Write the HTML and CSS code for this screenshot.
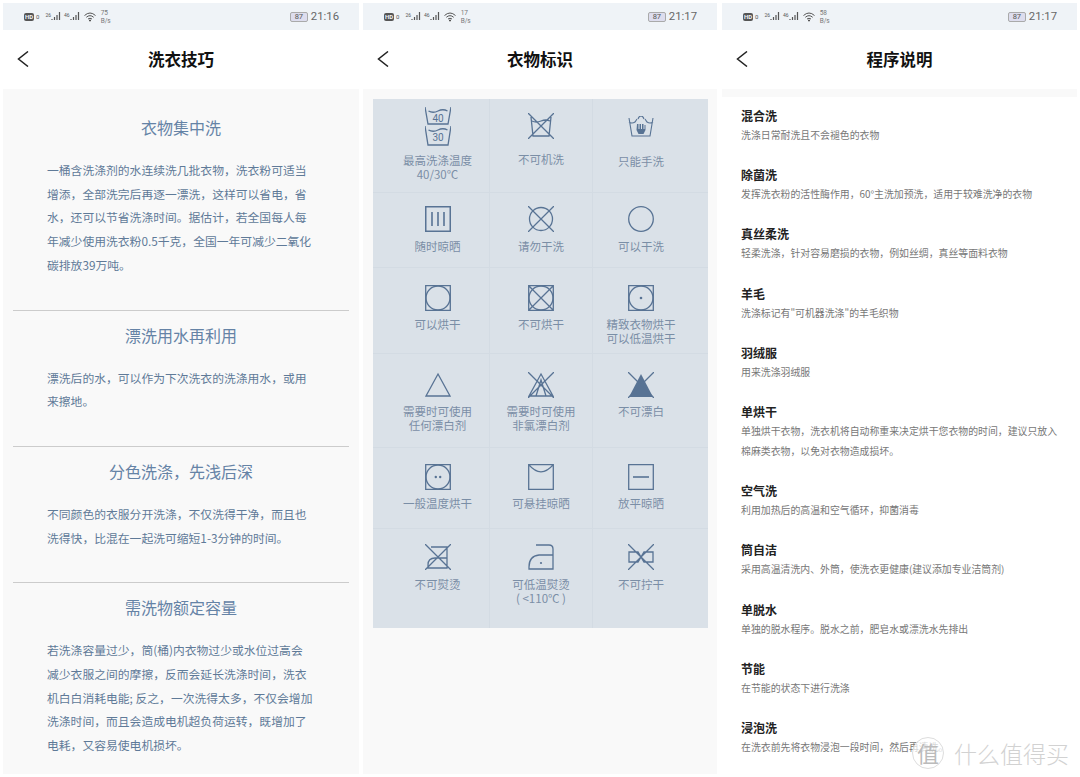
FILE: index.html
```html
<!DOCTYPE html>
<html lang="zh-CN">
<head>
    <meta charset="UTF-8">
    <title>洗衣机说明</title>
    <link rel="stylesheet" href="styles.css">
</head>
<body>
    <div class="screens">

        <!-- 洗衣技巧 -->
        <div class="screen screen-tips">
            <div class="status">
                <span class="hd">HD</span><span class="sim">0</span>
                <span class="net">26</span><svg class="bars" viewBox="0 0 11 9"><path d="M1 7v1M3.500 5v3M6 3v5M8.500 0v8"/></svg>
                <span class="net">46</span><svg class="bars" viewBox="0 0 11 9"><path d="M1 7v1M3.500 5v3M6 3v5M8.500 0v8"/></svg>
                <svg class="wifi" viewBox="0 0 12 10"><path d="M.5 3.500Q6-1.500 11.500 3.500M2.300 5.300Q6 2 9.700 5.300M4 7Q6 5.500 8 7"/><path class="wifi-dot" d="M5 8.500h2"/></svg>
                <span class="speed">75<br>B/s</span>
                <span class="status-right"><span class="battery">87</span><span class="time">21:16</span></span>
            </div>
            <div class="header">
                <svg class="back" viewBox="0 0 12 16"><path d="M11 .5 1.500 8 11 15.500"/></svg>
                <h1>洗衣技巧</h1>
            </div>
            <div class="tips">
                <div class="tip">
                    <h2>衣物集中洗</h2>
                    <p>一桶含洗涤剂的水连续洗几批衣物，洗衣粉可适当<br>增添，全部洗完后再逐一漂洗，这样可以省电，省<br>水，还可以节省洗涤时间。据估计，若全国每人每<br>年减少使用洗衣粉0.5千克，全国一年可减少二氧化<br>碳排放39万吨。</p>
                </div>
                <div class="tip">
                    <h2>漂洗用水再利用</h2>
                    <p>漂洗后的水，可以作为下次洗衣的洗涤用水，或用<br>来擦地。</p>
                </div>
                <div class="tip">
                    <h2>分色洗涤，先浅后深</h2>
                    <p>不同颜色的衣服分开洗涤，不仅洗得干净，而且也<br>洗得快，比混在一起洗可缩短1-3分钟的时间。</p>
                </div>
                <div class="tip">
                    <h2>需洗物额定容量</h2>
                    <p>若洗涤容量过少，筒(桶)内衣物过少或水位过高会<br>减少衣服之间的摩擦，反而会延长洗涤时间，洗衣<br>机白白消耗电能; 反之，一次洗得太多，不仅会增加<br>洗涤时间，而且会造成电机超负荷运转，既增加了<br>电耗，又容易使电机损坏。</p>
                </div>
            </div>
        </div>

        <!-- 衣物标识 -->
        <div class="screen screen-symbols">
            <div class="status">
                <span class="hd">HD</span><span class="sim">0</span>
                <span class="net">26</span><svg class="bars" viewBox="0 0 11 9"><path d="M1 7v1M3.500 5v3M6 3v5M8.500 0v8"/></svg>
                <span class="net">46</span><svg class="bars" viewBox="0 0 11 9"><path d="M1 7v1M3.500 5v3M6 3v5M8.500 0v8"/></svg>
                <svg class="wifi" viewBox="0 0 12 10"><path d="M.5 3.500Q6-1.500 11.500 3.500M2.300 5.300Q6 2 9.700 5.300M4 7Q6 5.500 8 7"/><path class="wifi-dot" d="M5 8.500h2"/></svg>
                <span class="speed">17<br>B/s</span>
                <span class="status-right"><span class="battery">87</span><span class="time">21:17</span></span>
            </div>
            <div class="header">
                <svg class="back" viewBox="0 0 12 16"><path d="M11 .5 1.500 8 11 15.500"/></svg>
                <h1>衣物标识</h1>
            </div>
            <div class="symbols-page">
                <div class="symbols">
                    <div class="sym-row row-1">
                        <div class="cell">
                            <svg class="icon icon-tall" viewBox="0 0 26 40">
                                <path d="M0 0 3 17H23L26 0M3.500 4Q8 6.500 13 4T22.500 4"/>
                                <path d="M0 19 3 38H23L26 19M3.500 23Q8 25.500 13 23T22.500 23"/>
                                <text x="13" y="15" class="icon-num">40</text>
                                <text x="13" y="34" class="icon-num">30</text>
                            </svg>
                            <span>最高洗涤温度<br>40/30℃</span>
                        </div>
                        <div class="cell">
                            <svg class="icon icon-mid" viewBox="0 0 26 26"><path d="M3 4 5 23H21L23 4M4 8Q8 10 13 8T22 8M0 0 26 26M26 0 0 26"/></svg>
                            <span>不可机洗</span>
                        </div>
                        <div class="cell">
                            <svg class="icon icon-low" viewBox="0 0 26 22"><path d="M1 2 4 20H22L25 2M1 6Q4 8 7 6L9 3M25 6Q22 8 19 6L17 3M10 3Q11 0 13 0T16 3" class="icon-thin"/><path class="icon-fill" d="M9 8h1.500v5h1V8h1.500v5h1V8h1.500v5h1V9h1v5l-2 4h-5l-2-4z"/></svg>
                            <span>只能手洗</span>
                        </div>
                    </div>
                    <div class="sym-row row-2">
                        <div class="cell">
                            <svg class="icon" viewBox="0 0 26 26"><path d="M.7.7H25.300V25.300H.7ZM7 6V20M13 6V20M19 6V20" class="icon-bold"/></svg>
                            <span>随时晾晒</span>
                        </div>
                        <div class="cell">
                            <svg class="icon" viewBox="0 0 26 26"><circle cx="13" cy="13" r="11.500"/><path d="M0 0 26 26M26 0 0 26"/></svg>
                            <span>请勿干洗</span>
                        </div>
                        <div class="cell">
                            <svg class="icon" viewBox="0 0 26 26"><circle cx="13" cy="13" r="12.300"/></svg>
                            <span>可以干洗</span>
                        </div>
                    </div>
                    <div class="sym-row row-3">
                        <div class="cell">
                            <svg class="icon" viewBox="0 0 26 26"><path d="M.7.7H25.300V25.300H.7Z"/><circle cx="13" cy="13" r="12"/></svg>
                            <span>可以烘干</span>
                        </div>
                        <div class="cell">
                            <svg class="icon" viewBox="0 0 26 26"><path d="M.7.7H25.300V25.300H.7ZM.7.7 25.300 25.300M25.300.7 .7 25.300"/><circle cx="13" cy="13" r="12"/></svg>
                            <span>不可烘干</span>
                        </div>
                        <div class="cell">
                            <svg class="icon" viewBox="0 0 26 26"><path d="M.7.7H25.300V25.300H.7Z"/><circle cx="13" cy="13" r="12"/><circle class="icon-fill" cx="13" cy="13" r="1.300"/></svg>
                            <span>精致衣物烘干<br>可以低温烘干</span>
                        </div>
                    </div>
                    <div class="sym-row row-4">
                        <div class="cell">
                            <svg class="icon" viewBox="0 0 26 26"><path d="M13 2 25 24H1Z"/></svg>
                            <span>需要时可使用<br>任何漂白剂</span>
                        </div>
                        <div class="cell">
                            <svg class="icon" viewBox="0 0 26 26"><path d="M13 2 25 24H1ZM8 24 13 8 18 24M0 0 26 26M26 0 0 26"/></svg>
                            <span>需要时可使用<br>非氯漂白剂</span>
                        </div>
                        <div class="cell">
                            <svg class="icon" viewBox="0 0 26 26"><path class="icon-fill" d="M13 2 25 25H1Z"/><path d="M0 0 26 26M26 0 0 26"/></svg>
                            <span>不可漂白</span>
                        </div>
                    </div>
                    <div class="sym-row row-5">
                        <div class="cell">
                            <svg class="icon" viewBox="0 0 26 26"><path d="M.7.7H25.300V25.300H.7Z"/><circle cx="13" cy="13" r="12"/><circle class="icon-fill" cx="10.800" cy="13" r="1.200"/><circle class="icon-fill" cx="15.200" cy="13" r="1.200"/></svg>
                            <span>一般温度烘干</span>
                        </div>
                        <div class="cell">
                            <svg class="icon" viewBox="0 0 26 26"><path d="M.7.7H25.300V25.300H.7ZM.7.7Q13 15 25.300.7"/></svg>
                            <span>可悬挂晾晒</span>
                        </div>
                        <div class="cell">
                            <svg class="icon" viewBox="0 0 26 26"><path d="M.7.7H25.300V25.300H.7Z"/><path class="icon-bold" d="M5 13H21"/></svg>
                            <span>放平晾晒</span>
                        </div>
                    </div>
                    <div class="sym-row row-6">
                        <div class="cell">
                            <svg class="icon" viewBox="0 0 26 26"><path d="M6 3H22V24H3V21Q3 14 10 14H22M0 0 26 26M26 0 0 26"/></svg>
                            <span>不可熨烫</span>
                        </div>
                        <div class="cell">
                            <svg class="icon" viewBox="0 0 26 26"><path d="M8 1H21Q25 1 25 5V25H1V23Q1 12 11 11H25"/><circle class="icon-fill" cx="13" cy="19" r="1.100"/></svg>
                            <span>可低温熨烫<br>( &lt;110℃ )</span>
                        </div>
                        <div class="cell">
                            <svg class="icon" viewBox="0 0 26 26"><path d="M1 8H10L16 18H25V8H16L10 18H1ZM0 0 26 26M26 0 0 26"/></svg>
                            <span>不可拧干</span>
                        </div>
                    </div>
                </div>
            </div>
        </div>

        <!-- 程序说明 -->
        <div class="screen screen-programs">
            <div class="status">
                <span class="hd">HD</span><span class="sim">0</span>
                <span class="net">26</span><svg class="bars" viewBox="0 0 11 9"><path d="M1 7v1M3.500 5v3M6 3v5M8.500 0v8"/></svg>
                <span class="net">46</span><svg class="bars" viewBox="0 0 11 9"><path d="M1 7v1M3.500 5v3M6 3v5M8.500 0v8"/></svg>
                <svg class="wifi" viewBox="0 0 12 10"><path d="M.5 3.500Q6-1.500 11.500 3.500M2.300 5.300Q6 2 9.700 5.300M4 7Q6 5.500 8 7"/><path class="wifi-dot" d="M5 8.500h2"/></svg>
                <span class="speed">58<br>B/s</span>
                <span class="status-right"><span class="battery">87</span><span class="time">21:17</span></span>
            </div>
            <div class="header">
                <svg class="back" viewBox="0 0 12 16"><path d="M11 .5 1.500 8 11 15.500"/></svg>
                <h1>程序说明</h1>
            </div>
            <div class="band"></div>
            <div class="programs">
                <div class="program"><h3>混合洗</h3><p>洗涤日常耐洗且不会褪色的衣物</p></div>
                <div class="program"><h3>除菌洗</h3><p>发挥洗衣粉的活性酶作用，60°主洗加预洗，适用于较难洗净的衣物</p></div>
                <div class="program"><h3>真丝柔洗</h3><p>轻柔洗涤，针对容易磨损的衣物，例如丝绸，真丝等面料衣物</p></div>
                <div class="program"><h3>羊毛</h3><p>洗涤标记有"可机器洗涤"的羊毛织物</p></div>
                <div class="program"><h3>羽绒服</h3><p>用来洗涤羽绒服</p></div>
                <div class="program"><h3>单烘干</h3><p>单独烘干衣物，洗衣机将自动称重来决定烘干您衣物的时间，建议只放入<br>棉麻类衣物，以免对衣物造成损坏。</p></div>
                <div class="program"><h3>空气洗</h3><p>利用加热后的高温和空气循环，抑菌消毒</p></div>
                <div class="program"><h3>筒自洁</h3><p>采用高温清洗内、外筒，使洗衣更健康(建议添加专业洁筒剂)</p></div>
                <div class="program"><h3>单脱水</h3><p>单独的脱水程序。脱水之前，肥皂水或漂洗水先排出</p></div>
                <div class="program"><h3>节能</h3><p>在节能的状态下进行洗涤</p></div>
                <div class="program"><h3>浸泡洗</h3><p>在洗衣前先将衣物浸泡一段时间，然后再清洗。</p></div>
            </div>
            <div class="watermark">
                <span class="watermark-badge">值</span>
                <span class="watermark-name">什么值得买</span>
            </div>
        </div>

    </div>
</body>
</html>
```

FILE: styles.css
```css
body {
    margin: 0;
    background-color: #fff;
    font-family: "Noto Sans CJK SC", "Noto Sans", sans-serif;
    overflow: hidden;
}

.screens {
    display: flex;
    height: 771px;
    padding: 3px 3px 3px 3px;
}

.screen {
    display: flex;
    flex-direction: column;
    position: relative;
    overflow: hidden;
}

.screen-tips {
    width: 356px;
    margin-right: 4px;
}

.screen-symbols {
    width: 354px;
    margin-right: 5px;
}

.screen-programs {
    width: 355px;
}

/* 状态栏 */
.status {
    display: flex;
    align-items: center;
    height: 27px;
    flex-shrink: 0;
    padding: 0 20px 0 21px;
    background-color: #eff3f7;
    color: #555;
    font-family: Roboto, sans-serif;
}

.hd {
    width: 10px;
    height: 8px;
    border-radius: 2px;
    background-color: #555;
    color: #eff3f7;
    font-size: 6px;
    font-weight: 700;
    line-height: 8px;
    text-align: center;
}

.sim {
    margin: 0 6px 0 2px;
    font-size: 6px;
}

.net {
    font-size: 5px;
    align-self: flex-start;
    margin-top: 9px;
}

.bars {
    width: 11px;
    height: 9px;
    margin-right: 2px;
    fill: none;
    stroke: #555;
    stroke-width: 1.200;
}

.wifi {
    width: 12px;
    height: 10px;
    margin-left: 1px;
    fill: none;
    stroke: #555;
    stroke-width: 1;
}

.wifi-dot {
    stroke-width: 1.500;
}

.speed {
    margin-left: 5px;
    font-size: 6.500px;
    line-height: 8px;
    color: #777;
}

.status-right {
    display: flex;
    align-items: center;
    margin-left: auto;
}

.battery {
    width: 16px;
    height: 8px;
    margin-right: 3px;
    border: 1px solid #aaa;
    border-radius: 2px;
    background-color: #dde;
    font-size: 7.500px;
    line-height: 8px;
    text-align: center;
}

.time {
    font-size: 11.300px;
    color: #666;
}

/* 标题栏 */
.header {
    display: grid;
    grid-template-columns: 1fr auto 1fr;
    align-items: center;
    height: 59px;
    box-sizing: border-box;
    flex-shrink: 0;
    padding: 0 14px 2px;
    background-color: #fff;
}

.header h1 {
    margin: 0;
    font-size: 16.500px;
    font-weight: 700;
    color: #111;
}

.back {
    width: 12px;
    height: 16px;
    fill: none;
    stroke: #222;
    stroke-width: 1.500;
}

/* 洗衣技巧 */
.tips {
    flex-grow: 1;
    padding: 26px 10px 0;
    background-color: #f9f9f9;
}

.tip {
    padding: 12px 0 33px;
    border-bottom: 1px solid #ccc;
}

.tip:first-child {
    padding-top: 0;
}

.tip:last-child {
    border-bottom: none;
}

.tip h2 {
    margin: 0 0 19px;
    font-size: 16px;
    font-weight: 400;
    line-height: 24px;
    text-align: center;
    color: #6583a6;
}

.tip p {
    margin: 0;
    padding-left: 34px;
    font-size: 11.800px;
    line-height: 23.700px;
    color: #5f7a98;
}

/* 衣物标识 */
.symbols-page {
    flex-grow: 1;
    padding: 10px 9px 0 10px;
    background-color: #f9f9f9;
}

.symbols {
    background-color: #dae1e8;
}

.sym-row {
    display: grid;
    grid-template-columns: 117px 103px 115px;
    border-bottom: 1px solid #d3dbe3;
    box-sizing: border-box;
}

.sym-row:last-child {
    border-bottom: none;
}

.row-1 { height: 94px; }
.row-2 { height: 75px; }
.row-3 { height: 86px; }
.row-4 { height: 94px; }
.row-5 { height: 81px; }
.row-6 { height: 99px; }

.cell {
    display: flex;
    flex-direction: column;
    align-items: center;
    box-sizing: border-box;
    border-right: 1px solid #d3dbe3;
    font-size: 11.500px;
    line-height: 14px;
    text-align: center;
    color: #7a8ea6;
}

.cell:nth-child(1) {
    padding-left: 13px;
}

.cell:nth-child(3) {
    padding-right: 19px;
    border-right: none;
}

.cell span {
    margin-top: 6px;
}

.row-2 .cell span,
.row-6 .cell span {
    margin-top: 7px;
}

.row-1 .cell { padding-top: 8px; }
.row-2 .cell { padding-top: 13px; }
.row-3 .cell { padding-top: 17px; }
.row-4 .cell { padding-top: 18px; }
.row-5 .cell { padding-top: 16px; }
.row-6 .cell { padding-top: 15px; }

.icon {
    width: 26px;
    height: 26px;
    flex-shrink: 0;
    fill: none;
    stroke: #587394;
    stroke-width: 1.300;
}

.icon-tall {
    height: 40px;
}

.icon-mid {
    margin: 6px 0 7px;
}

.icon-low {
    height: 22px;
    margin: 9px 0 10px;
}

.icon-fill {
    fill: #587394;
    stroke: none;
}

.icon-bold {
    stroke-width: 1.600;
}

.icon-thin {
    stroke-width: 1.100;
}

.icon-num {
    fill: #587394;
    stroke: none;
    font-family: Roboto, sans-serif;
    font-size: 10px;
    text-anchor: middle;
}

/* 程序说明 */
.band {
    height: 8px;
    flex-shrink: 0;
    background-color: #f9f9f9;
}

.programs {
    flex-grow: 1;
    padding: 10px 0 0 19px;
    background-color: #fff;
}

.program {
    margin-bottom: 21.200px;
}

.program h3 {
    margin: 0;
    font-size: 12px;
    font-weight: 700;
    line-height: 18px;
    color: #222;
}

.program p {
    margin: 0;
    font-size: 9.900px;
    line-height: 20px;
    color: #777;
}

/* 水印 */
.watermark {
    position: absolute;
    right: 8px;
    bottom: 4px;
    display: flex;
    align-items: center;
    gap: 10px;
}

.watermark-badge {
    width: 32px;
    height: 32px;
    border: 1px solid #ddd;
    border-radius: 50%;
    box-sizing: border-box;
    font-size: 22px;
    line-height: 28px;
    text-align: center;
    color: #bbb;
    background-color: rgba(255, 255, 255, 0.7);
}

.watermark-name {
    font-size: 23px;
    font-weight: 300;
    color: #d2d2d2;
    text-shadow: 0 0 2px #fff;
}
```
